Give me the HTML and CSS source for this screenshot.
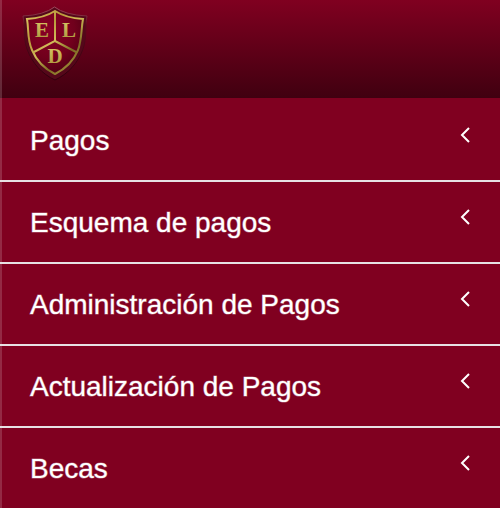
FILE: index.html
```html
<!DOCTYPE html>
<html lang="es">
<head>
<meta charset="utf-8">
<meta name="viewport" content="width=device-width, initial-scale=1">
<title>ELD</title>
<link rel="stylesheet" href="styles.css">
</head>
<body>
<header class="header">
  <svg class="logo" viewBox="20 4 70 80" role="img" aria-label="ELD">
    <defs>
      <linearGradient id="gold" gradientUnits="userSpaceOnUse" x1="26" y1="14" x2="76" y2="72">
        <stop offset="0" stop-color="#e0c965"/>
        <stop offset=".3" stop-color="#b9983a"/>
        <stop offset=".5" stop-color="#d2bb58"/>
        <stop offset=".75" stop-color="#7d6a24"/>
        <stop offset="1" stop-color="#b09a40"/>
      </linearGradient>
      <linearGradient id="letter" x1="0" y1="0" x2="0" y2="1">
        <stop offset="0" stop-color="#dccb68"/>
        <stop offset="1" stop-color="#a8933a"/>
      </linearGradient>
      <linearGradient id="rim" x1="0" y1="0" x2="0" y2="1">
        <stop offset="0" stop-color="#a04c60"/>
        <stop offset=".25" stop-color="#5c0a1c"/>
        <stop offset="1" stop-color="#2c000c"/>
      </linearGradient>
      <radialGradient id="field" cx=".4" cy=".3" r=".75">
        <stop offset="0" stop-color="#8b0026"/>
        <stop offset=".6" stop-color="#70001c"/>
        <stop offset="1" stop-color="#4a0012"/>
      </radialGradient>
    </defs>
    <path d="M54.500 7Q44 15 23 16C25 27 23 38 27 49C32 63 42 74 55 80C68 74 78 63 83 49C87 38 85 27 87 16Q65 15 54.500 7Z" fill="#55071a" stroke="url(#rim)" stroke-width="1"/>
    <path d="M55 11Q44 18 27 19C29 30 27 39 32 50C37 62 45 69 55 74C65 69 73 62 78 50C82 39 81 30 83 19Q66 18 55 11Z" fill="url(#field)" stroke="url(#gold)" stroke-width="2"/>
    <path d="M55 12V41L34 52M55 41L76 52" fill="none" stroke="url(#gold)" stroke-width="2"/>
    <g class="logo-letters" fill="url(#letter)">
      <text x="42" y="37">E</text>
      <text x="69" y="37">L</text>
      <text x="55" y="63">D</text>
    </g>
  </svg>
</header>
<nav class="menu" aria-label="Menú">
  <a class="item" href="#pagos">Pagos<svg class="chevron" viewBox="0 0 10 16" aria-hidden="true"><path d="M9 1L2 8L9 15"/></svg></a>
  <a class="item" href="#esquema">Esquema de pagos<svg class="chevron" viewBox="0 0 10 16" aria-hidden="true"><path d="M9 1L2 8L9 15"/></svg></a>
  <a class="item" href="#administracion">Administración de Pagos<svg class="chevron" viewBox="0 0 10 16" aria-hidden="true"><path d="M9 1L2 8L9 15"/></svg></a>
  <a class="item" href="#actualizacion">Actualización de Pagos<svg class="chevron" viewBox="0 0 10 16" aria-hidden="true"><path d="M9 1L2 8L9 15"/></svg></a>
  <a class="item" href="#becas">Becas<svg class="chevron" viewBox="0 0 10 16" aria-hidden="true"><path d="M9 1L2 8L9 15"/></svg></a>
</nav>
</body>
</html>
```
FILE: styles.css
```css
* {
  box-sizing: border-box;
}

body {
  margin: 0;
  background: #800020;
  color: #fff;
  font-family: "Liberation Sans", Arial, sans-serif;
}

.header {
  padding: 4px 20px 14px;
  background:
    linear-gradient(#ffffff29, #ffffff29) left / 2px 100% no-repeat,
    linear-gradient(#800020, #400010);
}

.logo {
  display: block;
  width: 70px;
  height: 80px;
}

.logo-letters {
  font: bold 21px "Liberation Serif", serif;
  text-anchor: middle;
}

.menu {
  padding-top: 2px;
  background: linear-gradient(#ffffff29, #ffffff29) left / 2px 100% no-repeat;
}

.item {
  display: flex;
  justify-content: space-between;
  padding: 25px 30px 23px;
  font-size: 28px;
  line-height: 32px;
  color: inherit;
  text-decoration: none;
  -webkit-text-stroke: 1px #ffffff66;
}

.item + .item {
  border-top: 2px solid #e7e0e3;
}

.chevron {
  flex: none;
  width: 10px;
  height: 16px;
  margin-top: 2px;
  fill: none;
  stroke: #fff;
  stroke-width: 2;
}
```
